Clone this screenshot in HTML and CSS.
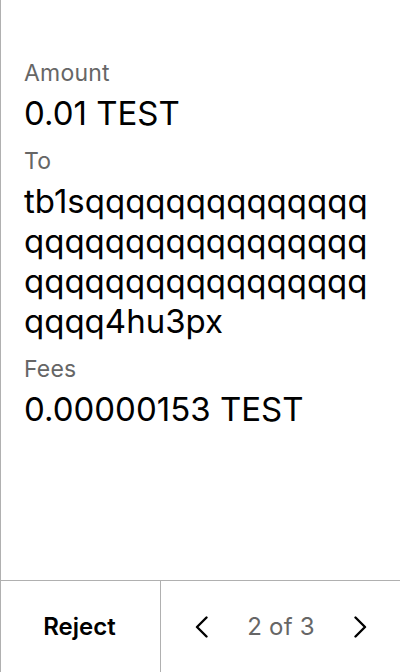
FILE: index.html
```html
<!DOCTYPE html>
<html lang="en">
<head>
<meta charset="utf-8">
<title>Review transaction</title>
<link rel="stylesheet" href="styles.css">
</head>
<body>
<div class="screen">
  <main class="details">
    <div class="label">Amount</div>
    <div class="value">0.01 TEST</div>
    <div class="label">To</div>
    <div class="value address">tb1sqqqqqqqqqqqqqqqqqqqqqqqqqqqqqqqqqqqqqqqqqqqqqqqqqqqq4hu3px</div>
    <div class="label">Fees</div>
    <div class="value">0.00000153 TEST</div>
  </main>
  <footer class="actions">
    <button class="reject">Reject</button>
    <div class="pager">
      <button class="nav" aria-label="Previous">
        <svg width="16" height="22" viewBox="0 0 16 22"><path d="M13.5 1.5 L4 11 L13.5 20.5" fill="none" stroke="#000" stroke-width="2.4" stroke-linecap="round" stroke-linejoin="round"/></svg>
      </button>
      <span class="count">2 of 3</span>
      <button class="nav" aria-label="Next">
        <svg width="16" height="22" viewBox="0 0 16 22"><path d="M2.5 1.5 L12 11 L2.5 20.5" fill="none" stroke="#000" stroke-width="2.4" stroke-linecap="round" stroke-linejoin="round"/></svg>
      </button>
    </div>
  </footer>
</div>
</body>
</html>
```

FILE: styles.css
```css
* { box-sizing: border-box; }
html, body { margin: 0; padding: 0; background: #fff; }
body { font-family: Inter, "Noto Sans", sans-serif; color: #000; }

.screen {
  width: 400px;
  height: 672px;
  border-left: 1px solid #b0b0b0;
  display: flex;
  flex-direction: column;
}

.details {
  flex: 1;
  padding: 59px 20px 0 23px;
}

.label {
  font-size: 23px;
  line-height: 28px;
  color: #666;
  margin-top: 14px;
  letter-spacing: 0.2px;
}
.label:first-child { margin-top: 0; }

.value {
  font-size: 33px;
  line-height: 40px;
  margin-top: 6px;
}

.address { word-break: break-all; }

.actions {
  height: 92px;
  border-top: 1px solid #b0b0b0;
  display: grid;
  grid-template-columns: 160px 1fr;
}

button {
  font-family: inherit;
  background: none;
  border: 0;
  padding: 0;
  margin: 0;
  cursor: pointer;
}

.reject {
  font-size: 24px;
  font-weight: 600;
  color: #000;
  border-right: 1px solid #b0b0b0;
  padding-right: 2px;
}

.pager {
  display: grid;
  grid-template-columns: 80px 80px 80px;
  align-items: center;
  justify-items: center;
}

.nav { display: flex; align-items: center; justify-content: center; }

.count {
  font-size: 24px;
  color: #666;
  letter-spacing: 0.2px;
}
```
